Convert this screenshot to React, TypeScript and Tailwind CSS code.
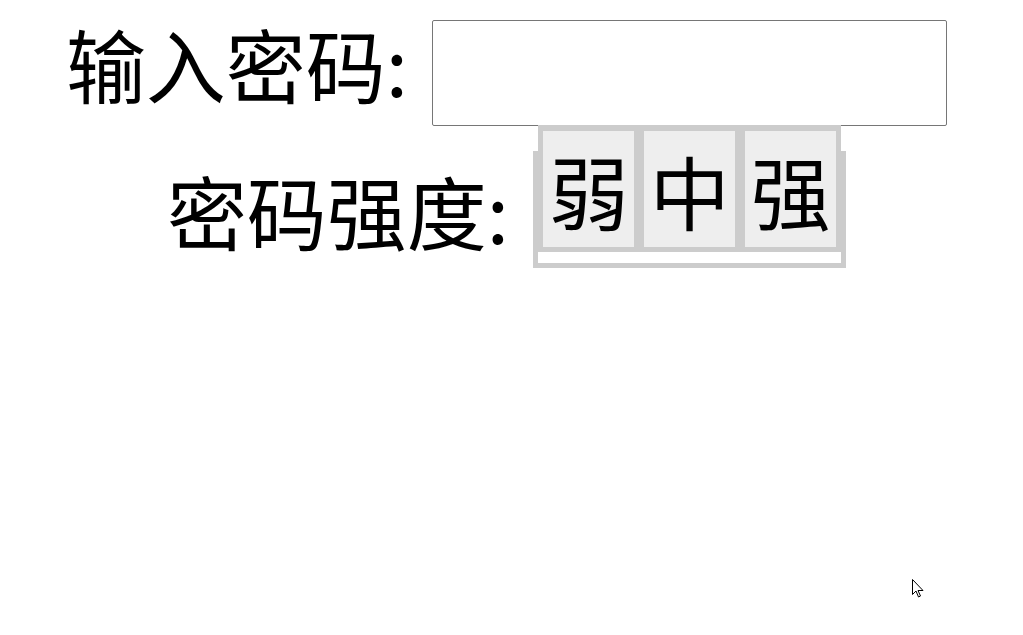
import { useState } from "react";

const levels = ["弱", "中", "强"];

export default function App() {
  const [pwd, setPwd] = useState("");

  return (
    <div className="relative min-h-[635px] bg-white font-['Noto_Sans_CJK_SC','Liberation_Sans',sans-serif] text-black">
      <div className="flex flex-col items-center pt-[20px] pr-[10px]">
        {/* password row */}
        <div className="flex items-start">
          <label className="mt-[2px] text-[80px] leading-[80px] whitespace-nowrap">输入密码:</label>
          <input
            type="password"
            value={pwd}
            onChange={(e) => setPwd(e.target.value)}
            className="ml-[24px] h-[106px] w-[515px] rounded-[2px] border border-[#767676] bg-white px-2 text-[60px] outline-none"
          />
        </div>

        {/* strength row */}
        <div className="-mt-px flex items-start">
          <span className="mt-[44px] text-[80px] leading-[80px] whitespace-nowrap">密码强度:</span>
          <div className="ml-[24px] pt-[26px]">
            <div className="w-[313px] border-[5px] border-[#ccc] bg-white pb-[11px]">
              <div className="-mt-[31px] flex gap-[10px] bg-[#ccc] px-[5px] pt-[6px] pb-[5px]">
                {levels.map((l) => (
                  <div
                    key={l}
                    className="flex h-[116px] w-[91px] items-center justify-center bg-[#eee] text-[80px] leading-none"
                  >
                    {l}
                  </div>
                ))}
              </div>
            </div>
          </div>
        </div>
      </div>

      {/* mouse cursor */}
      <svg className="absolute left-[912px] top-[579px]" width="13" height="20" viewBox="0 0 13 20">
        <path
          d="M0.5 0.5 L0.5 15.5 L4 12 L6.5 18 L8.5 17 L6 11.5 L11 11.5 Z"
          fill="white"
          stroke="black"
          strokeWidth="1"
          strokeLinejoin="miter"
        />
      </svg>
    </div>
  );
}
